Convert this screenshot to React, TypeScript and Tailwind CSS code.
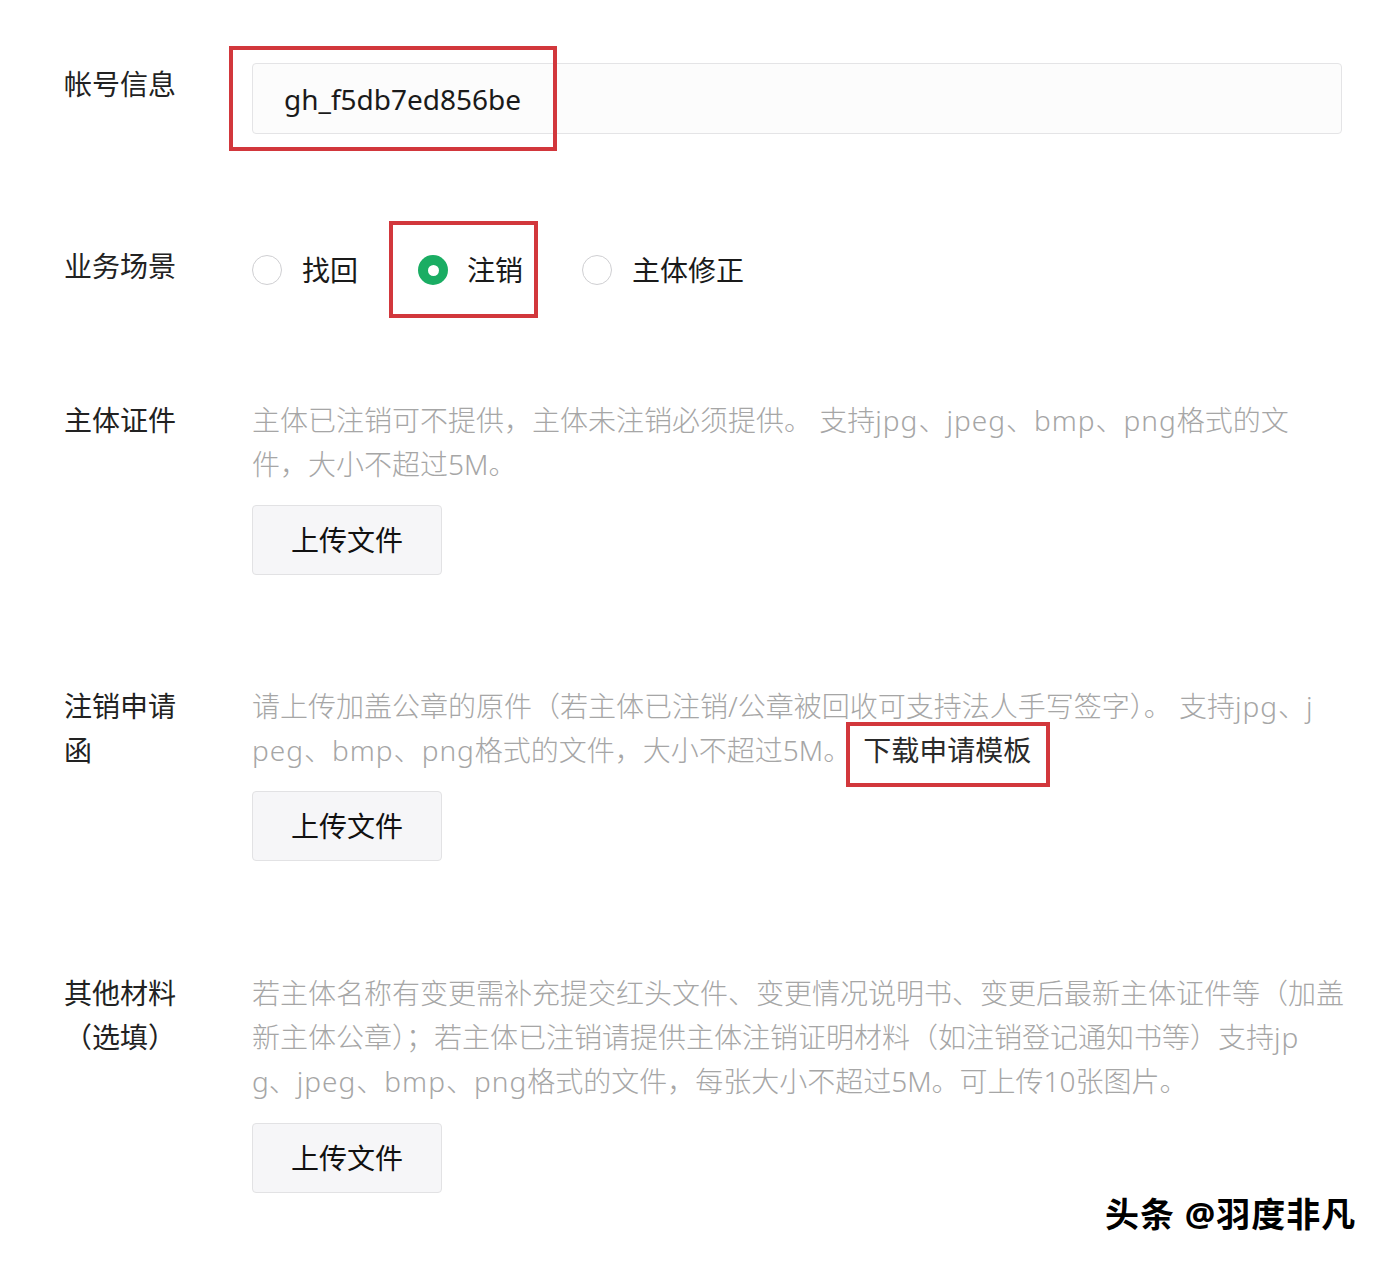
export default function App() {
  const desc = "text-[#a6a6a6] font-light whitespace-nowrap";
  const L = ({ children }: { children: string }) => (
    <span className="tracking-[1px]">{children}</span>
  );
  const Btn = () => (
    <div className="w-[190px] h-[70px] rounded-[4px] border border-[#e2e2e4] bg-[#f6f6f8] flex items-center justify-center text-[28px] text-[#111]">
      上传文件
    </div>
  );
  const RadioOff = () => (
    <span className="w-[30px] h-[30px] rounded-full border-[1.5px] border-[#cfcfd2] bg-white shrink-0" />
  );
  return (
    <div className="relative w-[1392px] h-[1264px] bg-white font-['Noto_Sans','Noto_Sans_CJK_SC',sans-serif] text-[28px] leading-[44px] text-[#222]">
      <div className="pl-[64px] pr-[50px] pt-[62px]">
        {/* Row 1 */}
        <div className="flex items-start">
          <div className="w-[188px] shrink-0">帐号信息</div>
          <div className="relative flex-1 mt-[1px] h-[71px] rounded-[4px] border border-[#e4e4e6] bg-[#fcfcfc] flex items-center pl-[31px] text-[28px] text-[#1a1a1a]">
            gh_f5db7ed856be
            <span className="absolute left-[-24px] top-[-18px] w-[328px] h-[105px] border-4 border-[#d2373c]" />
          </div>
        </div>

        {/* Row 2 */}
        <div className="flex items-start mt-[110px]">
          <div className="w-[188px] shrink-0">业务场景</div>
          <div className="flex items-center h-[44px] mt-[4px] text-[#1a1a1a]">
            <div className="flex items-center">
              <RadioOff />
              <span className="ml-[20px]">找回</span>
            </div>
            <div className="relative flex items-center ml-[60px]">
              <span className="w-[30px] h-[30px] rounded-full bg-[#1aad63] flex items-center justify-center shrink-0">
                <span className="w-[11px] h-[11px] rounded-full bg-white" />
              </span>
              <span className="ml-[19px]">注销</span>
              <span className="absolute left-[-29px] top-[-27px] w-[149px] h-[97px] border-4 border-[#d2373c]" />
            </div>
            <div className="flex items-center ml-[59px]">
              <RadioOff />
              <span className="ml-[20px]">主体修正</span>
            </div>
          </div>
        </div>

        {/* Row 3 */}
        <div className="flex items-start mt-[106px]">
          <div className="w-[188px] shrink-0">主体证件</div>
          <div className="flex-1">
            <div className={desc}>
              主体已注销可不提供，主体未注销必须提供。 支持<L>jpg</L>、<L>jpeg</L>、<L>bmp</L>、<L>png</L>格式的文
              <br />
              件，大小不超过5M。
            </div>
            <div className="mt-[19px]">
              <Btn />
            </div>
          </div>
        </div>

        {/* Row 4 */}
        <div className="flex items-start mt-[109px]">
          <div className="w-[188px] shrink-0 pr-[70px]">注销申请函</div>
          <div className="flex-1">
            <div className={desc}>
              请上传加盖公章的原件（若主体已注销/公章被回收可支持法人手写签字）。 支持<L>jpg</L>、j
              <br />
              <L>peg</L>、<L>bmp</L>、<L>png</L>格式的文件，大小不超过5M。
              <span className="relative inline-block ml-[12px] text-[#2a2a2a] font-normal">
                下载申请模板
                <span className="absolute left-[-17px] top-[-6px] w-[204px] h-[65px] border-4 border-[#d2373c]" />
              </span>
            </div>
            <div className="mt-[19px]">
              <Btn />
            </div>
          </div>
        </div>

        {/* Row 5 */}
        <div className="flex items-start mt-[110px]">
          <div className="w-[188px] shrink-0 pr-[70px]">其他材料（选填）</div>
          <div className="flex-1">
            <div className={desc}>
              若主体名称有变更需补充提交红头文件、变更情况说明书、变更后最新主体证件等（加盖
              <br />
              新主体公章）；若主体已注销请提供主体注销证明材料（如注销登记通知书等）支持<L>jp</L>
              <br />
              g、<L>jpeg</L>、<L>bmp</L>、<L>png</L>格式的文件，每张大小不超过5M。可上传10张图片。
            </div>
            <div className="mt-[20px]">
              <Btn />
            </div>
          </div>
        </div>
      </div>

      <div className="absolute left-[1105px] top-[1192px] text-[34px] font-bold text-black tracking-[1px] [text-shadow:1px_1px_0_#fff]">
        头条 @羽度非凡
      </div>
    </div>
  );
}
